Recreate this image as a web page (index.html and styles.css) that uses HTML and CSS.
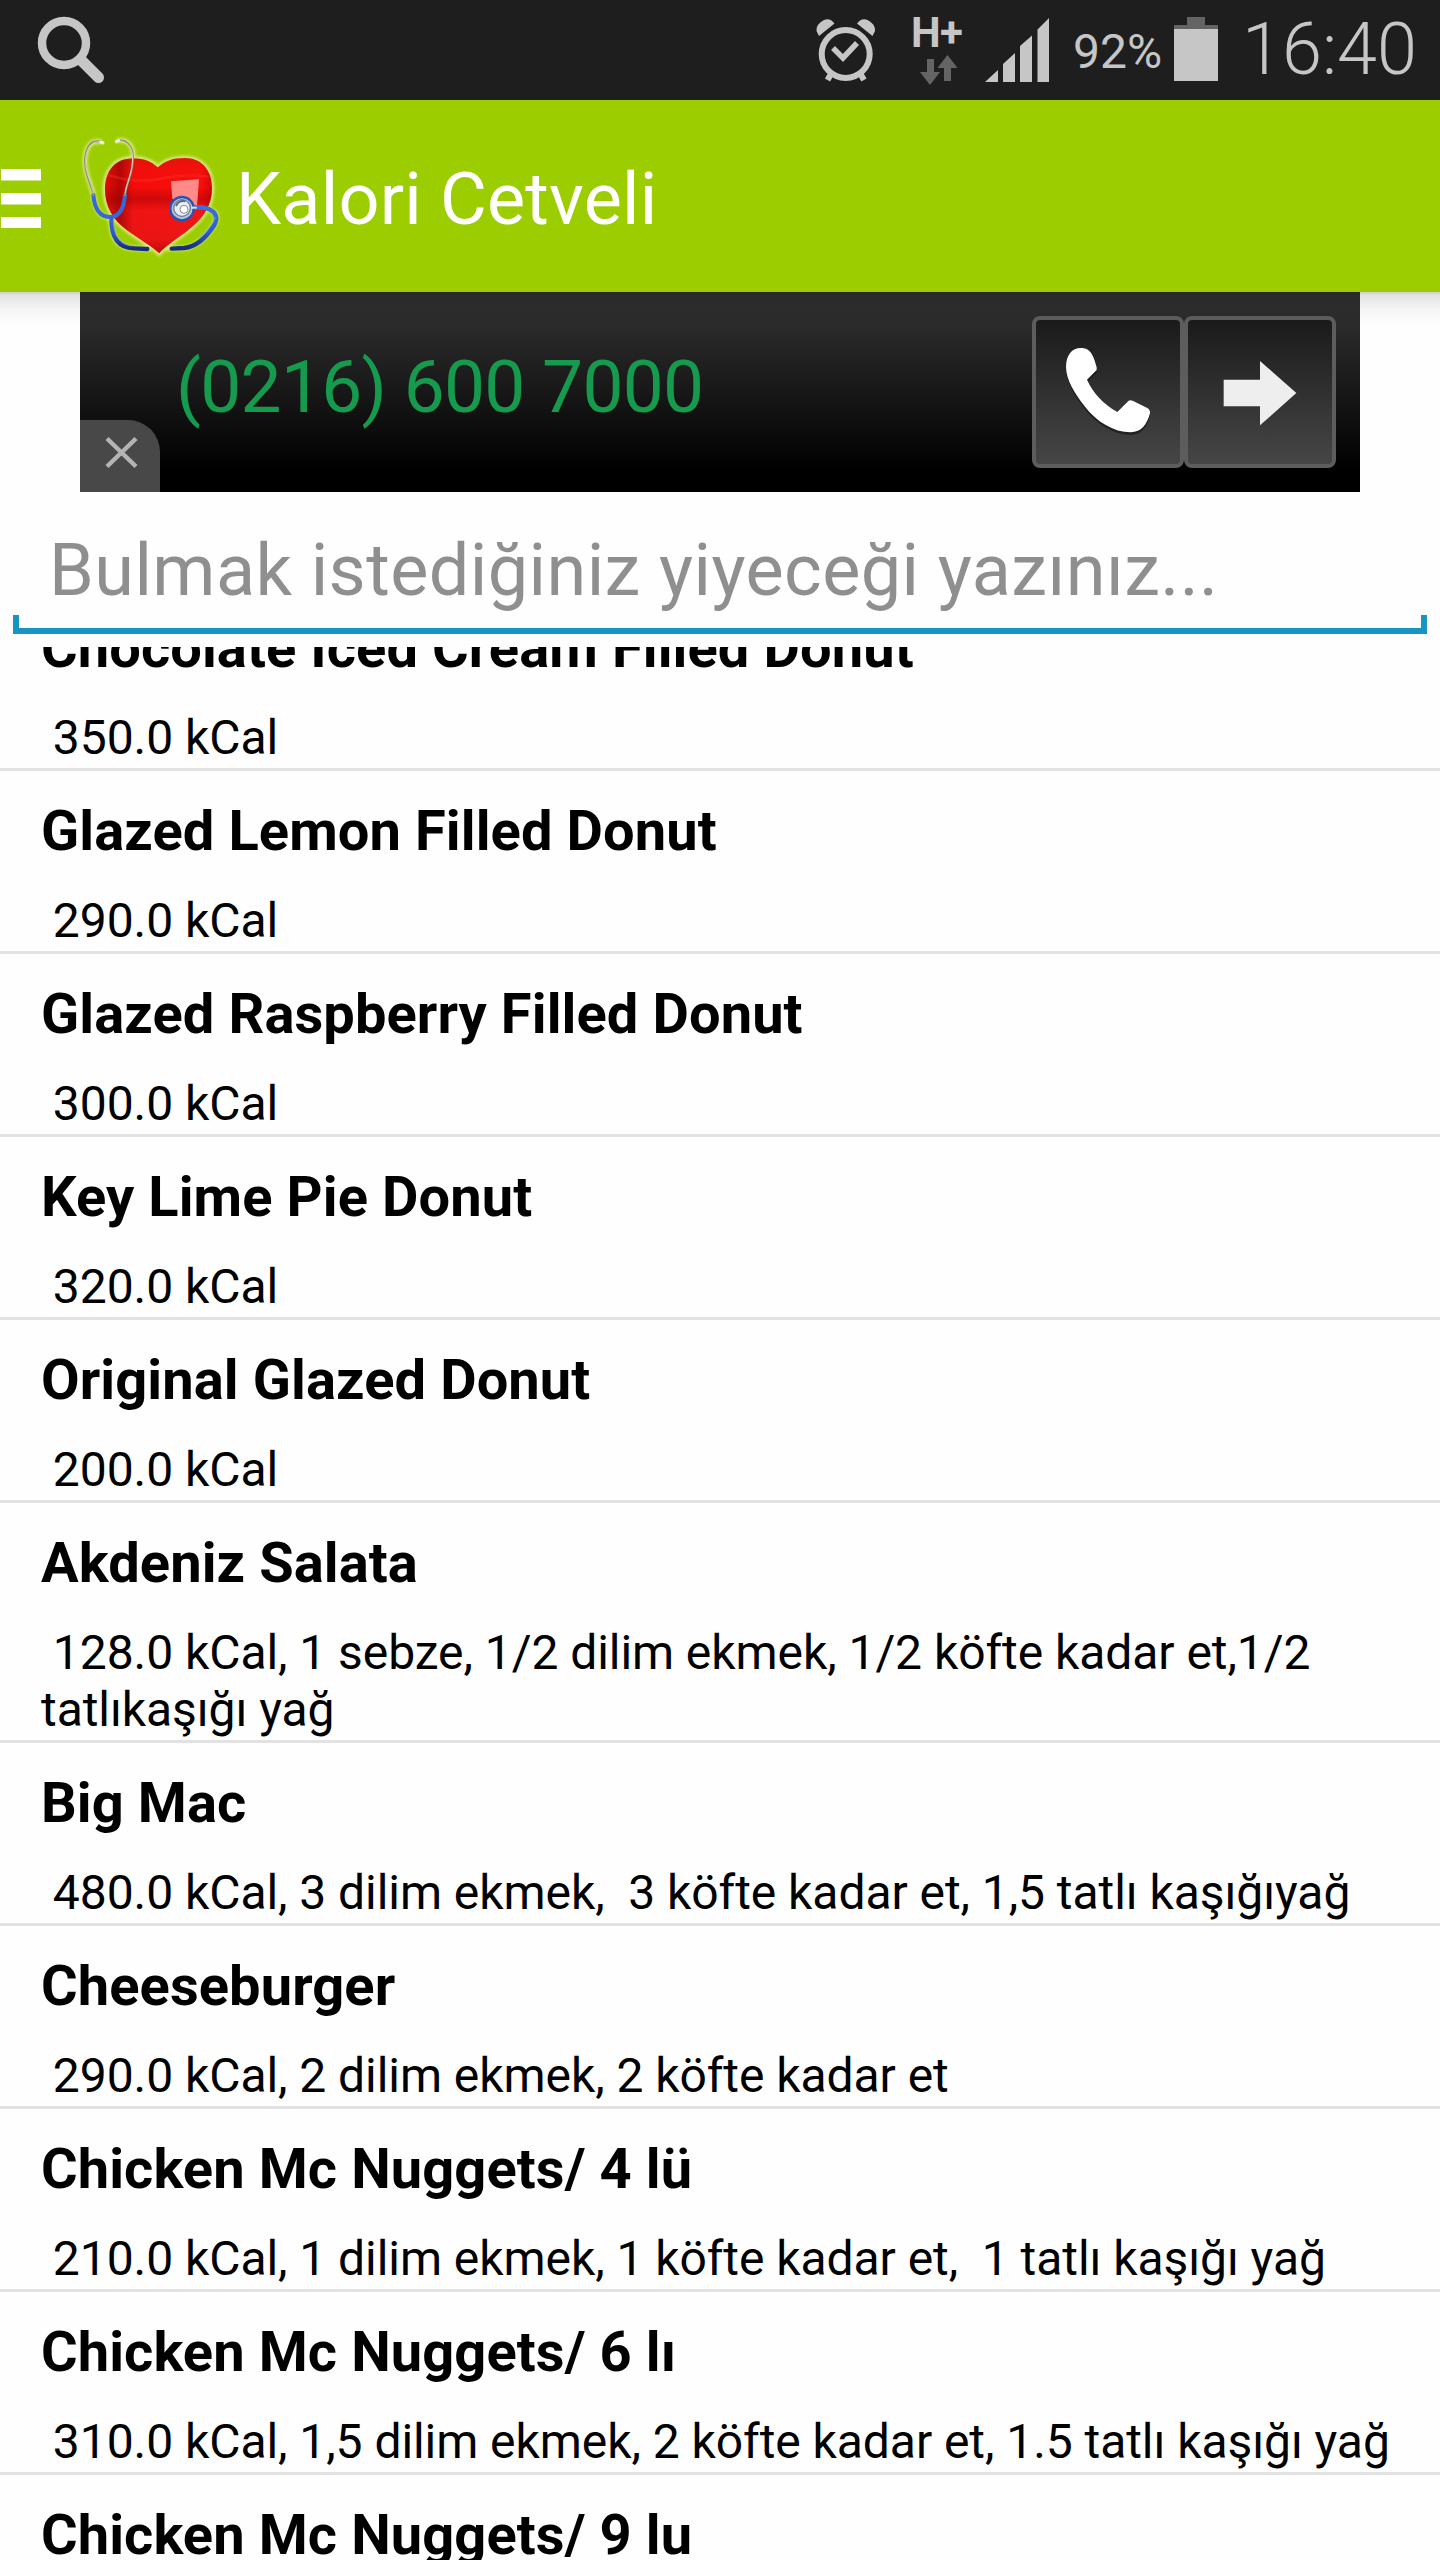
FILE: index.html
```
<!DOCTYPE html>
<html lang="tr">
<head>
<meta charset="utf-8">
<title>Kalori Cetveli</title>
<link rel="stylesheet" href="styles.css">
</head>
<body>
<div class="status">
  <svg class="status-search" width="76" height="100" viewBox="34 0 76 100" fill="none" stroke="#c6c6c6">
    <circle cx="64" cy="43" r="22" stroke-width="8.5"/>
    <path d="M81 60 L98.500 77.500" stroke-width="11" stroke-linecap="round"/>
  </svg>
  <svg class="status-alarm" width="60" height="100" viewBox="816 0 60 100">
    <g fill="#c6c6c6">
      <path d="M819 36 L834.500 23.500 Q830 17.500 824 20 Q816 24 816.500 31 Z"/>
      <path d="M872.500 36 L857 23.500 Q861.500 17.500 867.500 20 Q875.500 24 875 31 Z"/>
    </g>
    <g fill="none" stroke="#c6c6c6">
      <circle cx="845.700" cy="54" r="24" stroke-width="6"/>
      <path d="M833 48 L843 58 L857 43" stroke-width="5.500"/>
      <path d="M831 74 L827.500 80 M860.500 74 L864 80" stroke-width="6"/>
    </g>
  </svg>
  <svg class="status-data" width="60" height="100" viewBox="908 0 60 100">
    <text class="data-label" x="911" y="47">H</text>
    <text class="data-label" x="940" y="47">+</text>
    <path fill="#646464" d="M927 59h7v13h6l-10 13l-10 -13h7zM944 81v-13h-6.500l10 -13l10 13h-6.500v13z"/>
  </svg>
  <svg class="status-signal" width="64" height="100" viewBox="985 0 64 100" fill="#c6c6c6">
    <path d="M985 82L998 70V82ZM1003 82V64L1015 53V82ZM1020 82V46L1032 35.500V82ZM1037.500 82V29.500L1049 18V82Z"/>
  </svg>
  <span class="status-percent">92%</span>
  <svg class="status-battery" width="44" height="100" viewBox="1174 0 44 100">
    <path fill="#646464" d="M1187 17h18v8h13v4h-44v-4h13z"/>
    <path fill="#c6c6c6" d="M1174 29h44v52h-44z"/>
  </svg>
  <span class="status-clock">16:40</span>
</div>

<header class="appbar">
  <svg class="menu-icon" width="60" height="192" viewBox="0 100 60 192" fill="#fff">
    <path d="M1 169h40v11.500H1zM1 193h40v11.500H1zM1 217h40v11H1z"/>
  </svg>
  <svg class="logo" width="176" height="150" viewBox="0 0 528 450">
    <defs>
      <linearGradient id="red" x1="0" y1="0" x2="0" y2="1">
        <stop offset="0" stop-color="#e8120c"/>
        <stop offset=".12" stop-color="#f5100c"/>
        <stop offset=".3" stop-color="#fb0d0b"/>
        <stop offset=".43" stop-color="#cf0a08"/>
        <stop offset=".55" stop-color="#f51414"/>
        <stop offset=".85" stop-color="#ee1515"/>
        <stop offset="1" stop-color="#c50808"/>
      </linearGradient>
      <linearGradient id="shade" x1="0" y1="0" x2="1" y2="0">
        <stop offset="0" stop-color="#7a0000" stop-opacity=".15"/>
        <stop offset=".14" stop-color="#7a0000" stop-opacity=".55"/>
        <stop offset=".26" stop-color="#7a0000" stop-opacity=".05"/>
        <stop offset=".9" stop-color="#7a0000" stop-opacity="0"/>
        <stop offset="1" stop-color="#7a0000" stop-opacity=".3"/>
      </linearGradient>
      <linearGradient id="tube" x1="0" y1="0" x2="0" y2="1">
        <stop offset="0" stop-color="#3b6fe0"/>
        <stop offset=".6" stop-color="#2c5ccc"/>
        <stop offset="1" stop-color="#172c78"/>
      </linearGradient>
      <filter id="halo" x="-10%" y="-10%" width="120%" height="120%"><feGaussianBlur stdDeviation="5"/></filter>
      <path id="heart" d="M293 142 C270 118 240 113 205 116 C160 121 135 158 135 208 C135 262 160 300 200 330 C240 360 275 378 298 400 C315 378 350 358 385 330 C430 295 456 258 456 205 C456 150 425 114 375 114 C335 114 315 124 293 142 Z"/>
    </defs>
    <g class="halo" filter="url(#halo)" fill="none" stroke="#fff6c8" stroke-width="14">
      <use href="#heart"/>
      <path d="M125 66 C90 56 76 85 75 125 C76 165 95 195 100 225 C106 270 120 292 150 292 C155 350 165 385 225 385 H370 C410 380 440 350 462 315 C485 275 450 262 405 262 M170 62 C205 55 221 80 219 110"/>
    </g>
    <use href="#heart" fill="url(#red)"/>
    <use href="#heart" fill="url(#shade)"/>
    <path d="M145 165 Q220 190 292 178 Q370 160 446 170" fill="none" stroke="#ff3a2e" stroke-opacity=".3" stroke-width="8"/>
    <path d="M333 184 L417 178 L411 258 L337 236 Z" fill="#ff8a88"/>
    <g fill="none" stroke-linecap="round">
      <path d="M154 292 C153 350 172 384 222 385 L262 387 M335 386 L372 384 C410 380 442 348 463 315 C483 275 445 260 405 262" stroke="url(#tube)" stroke-width="13"/>
      <path d="M160 300 C160 345 178 374 215 378 M420 352 C440 335 462 308 466 292" stroke="#7f9de8" stroke-width="2.500"/>
      <path d="M100 225 C104 268 120 291 150 291 C182 290 192 262 195 225" stroke="#3568d8" stroke-width="12"/>
      <path d="M100 225 C96 195 74 165 75 122 C77 82 92 57 125 66 M195 225 C197 190 220 165 219 108 C217 76 198 56 170 63" stroke="#8f9478" stroke-width="6"/>
      <path d="M100 218 C96 190 76 160 77 122 C79 84 94 60 125 67 M196 218 C199 188 219 160 218 108 C215 78 198 60 170 64" stroke="#dfe2cc" stroke-width="2.500"/>
      <path d="M122 66 L129 69 M169 65 L176 62" stroke="#eef0dc" stroke-width="9"/>
    </g>
    <circle cx="366" cy="266" r="35" fill="#b9c4d6" stroke="#2555b8" stroke-width="7"/>
    <circle cx="366" cy="264" r="25" fill="#e9edf2" stroke="#6f7b8e" stroke-width="4"/>
    <path d="M348 258 Q356 240 376 244" fill="none" stroke="#5b6678" stroke-width="6"/>
    <circle cx="372" cy="268" r="12" fill="#fff" stroke="#848c98" stroke-width="3"/>
    <path d="M394 263h16" stroke="#dfe6f2" stroke-width="6"/>
  </svg>
  <h1 class="title">Kalori Cetveli</h1>
</header>

<main class="page">
  <div class="ad">
    <button class="ad-close" aria-label="Kapat">
      <svg width="80" height="72" viewBox="80 420 80 72"><path d="M107 438.500L136 466.500M136 438.500L107 466.500" stroke="#b4b4b4" stroke-width="4.500"/></svg>
    </button>
    <span class="ad-phone">(0216) 600 7000</span>
    <div class="ad-actions">
      <button class="ad-button" aria-label="Ara">
        <svg width="144" height="144" viewBox="108 120 432 432">
          <path d="M243 204 C265 204 278 214 290 262 L290 270 L261 299 C280 340 310 372 352 396 L386 362 Q390 359 398 362 L442 384 Q451 389 450 400 C440 435 425 456 392 457 C340 456 290 425 255 380 C225 342 198 300 198 260 C199 225 215 204 243 204Z" fill="#111" opacity=".6" transform="translate(0 8)"/>
          <path d="M243 204 C265 204 278 214 290 262 L290 270 L261 299 C280 340 310 372 352 396 L386 362 Q390 359 398 362 L442 384 Q451 389 450 400 C440 435 425 456 392 457 C340 456 290 425 255 380 C225 342 198 300 198 260 C199 225 215 204 243 204Z" fill="#fff"/>
        </svg>
      </button>
      <button class="ad-button" aria-label="Git">
        <svg width="144" height="144" viewBox="564 120 432 432"><path d="M671 299H780V243L889 339L780 436V379H671Z" fill="#eee"/></svg>
      </button>
    </div>
  </div>

  <div class="search">
    <div class="search-hint">Bulmak istediğiniz yiyeceği yazınız...</div>
    <div class="search-line"></div>
  </div>

  <div class="viewport">
    <ul class="list">
      <li class="row"><h2 class="name">Chocolate Iced Cream Filled Donut</h2><p class="info"> 350.0 kCal</p></li>
      <li class="row"><h2 class="name">Glazed Lemon Filled Donut</h2><p class="info"> 290.0 kCal</p></li>
      <li class="row"><h2 class="name">Glazed Raspberry Filled Donut</h2><p class="info"> 300.0 kCal</p></li>
      <li class="row"><h2 class="name">Key Lime Pie Donut</h2><p class="info"> 320.0 kCal</p></li>
      <li class="row"><h2 class="name">Original Glazed Donut</h2><p class="info"> 200.0 kCal</p></li>
      <li class="row"><h2 class="name">Akdeniz Salata</h2><p class="info"> 128.0 kCal, 1 sebze, 1/2 dilim ekmek, 1/2 köfte kadar et,1/2 tatlıkaşığı yağ</p></li>
      <li class="row"><h2 class="name">Big Mac</h2><p class="info"> 480.0 kCal, 3 dilim ekmek,  3 köfte kadar et, 1,5 tatlı kaşığıyağ</p></li>
      <li class="row"><h2 class="name">Cheeseburger</h2><p class="info"> 290.0 kCal, 2 dilim ekmek, 2 köfte kadar et</p></li>
      <li class="row"><h2 class="name">Chicken Mc Nuggets/ 4 lü</h2><p class="info"> 210.0 kCal, 1 dilim ekmek, 1 köfte kadar et,  1 tatlı kaşığı yağ</p></li>
      <li class="row"><h2 class="name">Chicken Mc Nuggets/ 6 lı</h2><p class="info"> 310.0 kCal, 1,5 dilim ekmek, 2 köfte kadar et, 1.5 tatlı kaşığı yağ</p></li>
      <li class="row"><h2 class="name">Chicken Mc Nuggets/ 9 lu</h2></li>
    </ul>
  </div>
</main>
</body>
</html>
```
FILE: styles.css
```
* { box-sizing: border-box; }

body {
  margin: 0;
  height: 2560px;
  overflow: hidden;
  display: flex;
  flex-direction: column;
  background: #fefefe;
  color: #000;
  font-family: Roboto, sans-serif;
}

svg { display: block; flex: none; }
h1, h2, p, ul { margin: 0; padding: 0; }
button { border: 0; padding: 0; font: inherit; }

/* Status bar */
.status {
  flex: none;
  display: flex;
  height: 100px;
  padding: 0 23px 0 34px;
  background: #1e1e1e;
  color: #c6c6c6;
  white-space: nowrap;
}
.status-alarm { margin-left: auto; }
.status-data { margin-left: 32px; }
.status-signal { margin-left: 17px; }
.data-label { font-size: 42px; font-weight: 700; fill: #c6c6c6; }
.status-percent {
  width: 89px;
  margin-left: 24px;
  font-size: 48px;
  line-height: 104px;
}
.status-battery { margin-left: 12px; }
.status-clock {
  width: 175px;
  margin-left: 24px;
  font-size: 72px;
  font-weight: 300;
  line-height: 100px;
}

/* App bar */
.appbar {
  flex: none;
  display: flex;
  height: 192px;
  background: #9bcd00;
}
.logo { margin-top: 20px; }
.halo { opacity: .65; }
.title {
  color: #fff;
  font-size: 72px;
  font-weight: 400;
  letter-spacing: .18px;
  line-height: 199px;
  height: 192px;
}

.page {
  position: relative;
  flex: 1;
  min-height: 0;
  display: flex;
  flex-direction: column;
}
/* Shadow cast by the app bar over the content */
.page::before {
  content: "";
  position: absolute;
  inset: 0 0 auto;
  height: 34px;
  background: linear-gradient(rgba(0,0,0,.2), rgba(0,0,0,.11) 3px, rgba(0,0,0,.04) 16px, transparent);
}

/* Banner */
.ad {
  flex: none;
  display: flex;
  width: 1280px;
  height: 200px;
  margin: 0 auto;
  padding-right: 24px;
  background: linear-gradient(#303030, #2a2a2a 18%, #000 90%);
}
.ad-close {
  align-self: flex-end;
  width: 80px;
  height: 72px;
  border-top-right-radius: 32px;
  background: #484848;
}
.ad-phone {
  margin-left: 16px;
  color: #159a4e;
  font-size: 73px;
  letter-spacing: -.7px;
  line-height: 190px;
  white-space: nowrap;
}
.ad-actions { display: flex; align-self: center; margin-left: auto; }
.ad-button {
  width: 152px;
  height: 152px;
  border: 4px solid #5d5d5d;
  border-radius: 8px;
  background: linear-gradient(#1a1a1a, #464646);
}

/* Search field */
.search { flex: none; height: 155px; padding: 37px 13px 0; }
.search-hint {
  padding-left: 36px;
  color: #8f8f8f;
  font-size: 72px;
  letter-spacing: .42px;
  line-height: 84px;
  white-space: nowrap;
}
.search-line {
  height: 19px;
  margin-top: 2px;
  border: solid #1795c2;
  border-width: 0 6px 6px;
}

/* Food list */
.viewport { flex: 1; min-height: 0; overflow: hidden; }
.list { margin-top: -59px; list-style: none; }
.row {
  padding: 27px 40px 2px 41px;
  border-bottom: 3px solid #e2e2e2;
}
.name {
  font-size: 56px;
  font-weight: 700;
  letter-spacing: .1px;
  line-height: 66px;
}
.info {
  margin-top: 28px;
  font-size: 48px;
  letter-spacing: -.06px;
  line-height: 57px;
  white-space: pre-wrap;
}
```
